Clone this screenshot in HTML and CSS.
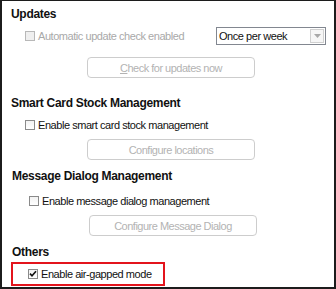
FILE: index.html
```html
<!DOCTYPE html>
<html lang="en">
<head>
    <meta charset="UTF-8">
    <title>Settings</title>
    <link rel="stylesheet" href="styles.css">
</head>
<body>

<div class="frame">

    <section class="group group--updates">
        <h2 class="group-title">Updates</h2>
        <div class="option-row option-row--select">
            <label class="option is-disabled"><span class="box"></span>Automatic update check enabled</label>
            <div class="select">
                <span class="select-value">Once per week</span>
                <span class="select-arrow">
                    <svg width="7" height="4" viewBox="0 0 7 4"><path d="M0 0h7L3.5 4z" fill="#a8a8a8"/></svg>
                </span>
            </div>
        </div>
        <div class="action"><span class="btn"><u>C</u>heck for updates now</span></div>
    </section>

    <section class="group group--stock">
        <h2 class="group-title">Smart Card Stock Management</h2>
        <div class="option-row">
            <label class="option"><span class="box"></span>Enable smart card stock management</label>
        </div>
        <div class="action"><span class="btn">Configure locations</span></div>
    </section>

    <section class="group group--message">
        <h2 class="group-title">Message Dialog Management</h2>
        <div class="option-row">
            <label class="option"><span class="box"></span>Enable message dialog management</label>
        </div>
        <div class="action"><span class="btn">Configure Message Dialog</span></div>
    </section>

    <section class="group group--others">
        <h2 class="group-title">Others</h2>
        <div class="highlight">
            <label class="option"><span class="box is-checked">
                <svg width="8" height="8" viewBox="0 0 8 8"><path d="M1 3.6l2 2.2L7 1.2" fill="none" stroke="#111" stroke-width="1.6"/></svg>
            </span>Enable air-gapped mode</label>
        </div>
    </section>

</div>

</body>
</html>
```

FILE: styles.css
```css
* {
    box-sizing: border-box;
}

body {
    margin: 0;
    font-family: "Liberation Sans", Arial, sans-serif;
    background: #fff;
}

.frame {
    width: 336px;
    height: 289px;
    border: 2px solid #1c1c1c;
    border-top-width: 1px;
    padding: 6px 8px 0 9px;
    background: #fff;
}

/* section titles */
.group-title {
    margin: 0;
    font-size: 12px;
    line-height: 15px;
    font-weight: bold;
    letter-spacing: -0.3px;
    color: #111;
}

.group--stock .group-title { margin-top: 18px; }
.group--message .group-title { margin-top: 9px; }
.group--others .group-title { margin-top: 9px; }

.group--message { padding-left: 1px; }
.group--others .group-title { padding-left: 1px; }

/* checkbox rows */
.option-row {
    display: flex;
    align-items: center;
    justify-content: space-between;
    height: 14px;
    margin-top: 7px;
    padding-left: 14px;
}

.option-row--select {
    height: 18px;
    margin-top: 5px;
}

.group--message .option-row {
    margin-top: 10px;
    padding-left: 17px;
}

.option {
    display: flex;
    align-items: center;
    gap: 3px;
    font-size: 11px;
    letter-spacing: -0.45px;
    color: #111;
}

.option.is-disabled {
    color: #a9a9a9;
}

.box {
    width: 10px;
    height: 10px;
    border: 1px solid #8a8a8a;
    background: linear-gradient(#f2f2f2, #fff);
    display: flex;
    align-items: center;
    justify-content: center;
}

.is-disabled .box {
    border-color: #b8b8b8;
    background: #efefef;
}

/* combo box */
.select {
    width: 110px;
    height: 18px;
    border: 1px solid #828790;
    display: flex;
    align-items: center;
    background: #fff;
}

.select-value {
    flex-grow: 1;
    padding-left: 2px;
    font-size: 11px;
    letter-spacing: -0.45px;
    color: #111;
}

.select-arrow {
    width: 14px;
    height: 14px;
    margin-right: 1px;
    border: 1px solid #d0d0d0;
    background: #f6f6f6;
    display: flex;
    align-items: center;
    justify-content: center;
}

/* buttons */
.action {
    padding-left: 76px;
    margin-top: 7px;
}

.group--updates .action { margin-top: 12px; }
.group--message .action { padding-left: 77px; }

.btn {
    display: flex;
    align-items: center;
    justify-content: center;
    width: 168px;
    height: 21px;
    border: 1px solid #cdcdcd;
    border-radius: 4px;
    font-size: 11px;
    letter-spacing: -0.5px;
    color: #b3b3b3;
}

/* highlighted option */
.highlight {
    margin-top: 2px;
    width: 154px;
    height: 24px;
    border: 2px solid #e3141c;
    padding-left: 15px;
    display: flex;
    align-items: center;
}
```
